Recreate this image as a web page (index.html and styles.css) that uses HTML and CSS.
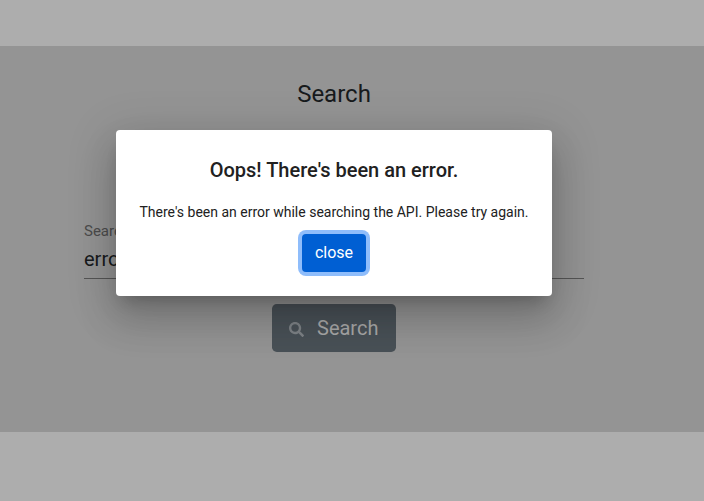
FILE: index.html
```html
<!DOCTYPE html>
<html lang="en">
<head>
<meta charset="utf-8">
<title>Search</title>
<link rel="stylesheet" href="styles.css">
</head>
<body>
<main class="panel">
  <h1 class="title">Search</h1>
  <form class="form">
    <label class="field">
      <span class="field-label">Search</span>
      <span class="field-value">error</span>
    </label>
    <button class="search" type="button">
      <svg class="icon" viewBox="0 0 512 512"><path fill="currentColor" d="M505 442.700L405.300 343c-4.500-4.500-10.600-7-17-7H372c27.600-35.300 44-79.700 44-128C416 93.100 322.900 0 208 0S0 93.100 0 208s93.100 208 208 208c48.300 0 92.700-16.400 128-44v16.300c0 6.400 2.500 12.500 7 17l99.700 99.700c9.400 9.400 24.600 9.400 33.900 0l28.300-28.300c9.400-9.400 9.400-24.600.1-34zM208 336c-70.700 0-128-57.200-128-128 0-70.700 57.200-128 128-128 70.700 0 128 57.200 128 128 0 70.700-57.200 128-128 128z"/></svg>
      <span>Search</span>
    </button>
  </form>
</main>
<div class="overlay">
  <section class="dialog" role="dialog">
    <h2 class="dialog-title">Oops! There's been an error.</h2>
    <p class="dialog-text">There's been an error while searching the API. Please try again.</p>
    <button class="close" type="button">close</button>
  </section>
</div>
</body>
</html>
```

FILE: styles.css
```css
* { box-sizing: border-box; }
body {
  margin: 0;
  height: 501px;
  padding-top: 46px;
  overflow: hidden;
  background: #adadad;
  color: #171a1c;
  font-family: Roboto, sans-serif;
}
.panel {
  height: 386px;
  padding: 32px 120px 0 84px;
  background: #949494;
}
.title {
  margin: 0;
  height: 32px;
  font-size: 24px;
  line-height: 32px;
  font-weight: 400;
  text-align: center;
}
.form {
  display: flex;
  flex-direction: column;
  align-items: center;
  padding-top: 112px;
}
.field {
  display: flex;
  flex-direction: column;
  width: 500px;
  height: 57px;
  border-bottom: 1px solid #555;
}
.field-label { font-size: 15px; line-height: 18px; color: #4c4c4c; }
.field-value { margin-top: 7px; font-size: 20px; line-height: 24px; }
.search {
  display: flex;
  align-items: center;
  width: 124px;
  height: 48px;
  margin-top: 25px;
  padding: 0 17px;
  gap: 13px;
  border: 0;
  border-radius: 4.8px;
  background: #495157;
  color: #a9a9a9;
  font: 400 20px/30px Roboto, sans-serif;
}
.icon { width: 15px; height: 15px; margin-top: 2px; color: #7e8387; }
.overlay {
  position: absolute;
  inset: 0;
  display: flex;
  align-items: flex-start;
  justify-content: center;
  padding: 130px 36px 0 0;
}
.dialog {
  display: flex;
  flex-direction: column;
  align-items: center;
  width: 436px;
  height: 166px;
  padding: 24px;
  border-radius: 4px;
  background: #fff;
  color: #212121;
  box-shadow: 0 11px 15px -7px rgba(0,0,0,.2), 0 24px 38px 3px rgba(0,0,0,.14), 0 9px 46px 8px rgba(0,0,0,.12);
}
.dialog-title { margin: 0; font-size: 20px; line-height: 32px; font-weight: 500; white-space: nowrap; }
.dialog-text { margin: 16px 0 12px; font-size: 14px; line-height: 20px; white-space: nowrap; }
.close {
  width: 64px;
  height: 38px;
  padding: 0;
  border: 0;
  border-radius: 4px;
  background: #005fd3;
  box-shadow: 0 0 0 4px #8fbdfb;
  color: #fff;
  font: 400 16px/24px Roboto, sans-serif;
}
```
